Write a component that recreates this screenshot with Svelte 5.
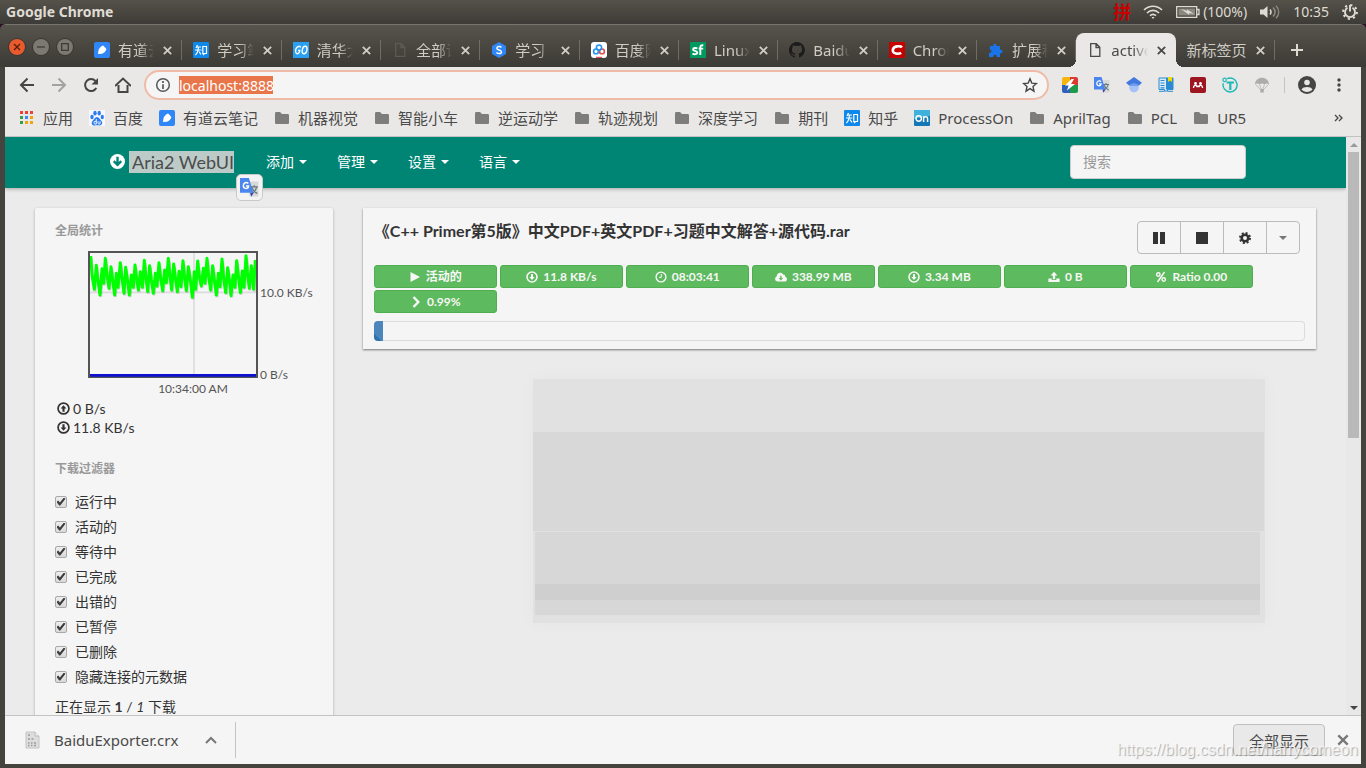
<script>
  const tabs = [
    { icon: 'note', title: '有道云笔记' },
    { icon: 'zhi', title: '学习笔记' },
    { icon: 'go', title: '清华大学' },
    { icon: 'page', title: '全部课程', dim: true },
    { icon: 'hex', title: '学习' },
    { icon: 'pan', title: '百度网盘' },
    { icon: 'sf', title: 'Linux下' },
    { icon: 'github', title: 'BaiduEx' },
    { icon: 'csdn', title: 'Chrome' },
    { icon: 'puzzle', title: '扩展程序' },
    { icon: 'page', title: 'active:1', active: true },
    { icon: '', title: '新标签页' }
  ];

  const bookmarks = [
    { icon: 'apps', title: '应用' },
    { icon: 'paw', title: '百度' },
    { icon: 'note', title: '有道云笔记' },
    { icon: 'folder', title: '机器视觉' },
    { icon: 'folder', title: '智能小车' },
    { icon: 'folder', title: '逆运动学' },
    { icon: 'folder', title: '轨迹规划' },
    { icon: 'folder', title: '深度学习' },
    { icon: 'folder', title: '期刊' },
    { icon: 'zhi', title: '知乎' },
    { icon: 'on', title: 'ProcessOn' },
    { icon: 'folder', title: 'AprilTag' },
    { icon: 'folder', title: 'PCL' },
    { icon: 'folder', title: 'UR5' }
  ];

  const extensions = ['flash', 'translate', 'scholar', 'book', 'mendeley', 'tee', 'parachute'];
  const menus = ['添加', '管理', '设置', '语言'];

  let filters = $state([
    { label: '运行中', on: true },
    { label: '活动的', on: true },
    { label: '等待中', on: true },
    { label: '已完成', on: true },
    { label: '出错的', on: true },
    { label: '已暂停', on: true },
    { label: '已删除', on: true },
    { label: '隐藏连接的元数据', on: true }
  ]);

  const stats = [
    { icon: 'play', text: '活动的' },
    { icon: 'down', text: '11.8 KB/s' },
    { icon: 'clock', text: '08:03:41' },
    { icon: 'cloud', text: '338.99 MB' },
    { icon: 'down', text: '3.34 MB' },
    { icon: 'upload', text: '0 B' },
    { icon: 'percent', text: 'Ratio 0.00' },
    { icon: 'chevron', text: '0.99%' }
  ];

  const progress = 0.99;
  let url = $state('localhost:8888');
  let search = $state('');

  // download speed samples, in the units of the graph's viewBox
  const speed =
    '272,168 276,225 283,268 289,196 293,235 300,285 306,206 311,250 316,175 321,225 327,265 333,200 338,240 344,285 349,220 354,262 361,188 366,235 372,280 377,202 383,245 388,285 394,225 400,262 405,195 410,235 415,270 421,215 427,262 433,181 438,235 443,275 449,197 454,240 460,280 466,220 471,258 477,188 482,235 488,272 494,210 499,248 505,175 510,230 515,270 521,192 527,240 532,275 537,214 543,260 549,182 554,235 559,272 565,200 571,240 577,292 583,215 587,268 593,183 598,230 604,258 610,205 615,250 621,175 626,230 632,270 638,197 643,240 649,285 655,220 660,260 666,177 671,235 677,278 683,203 688,240 693,287 699,225 705,262 710,182 716,235 721,278 727,213 732,262 738,167 743,225 748,265 754,197 761,268 766,180';
</script>

{#snippet icon(name)}
  <svg class="icon" viewBox="0 0 16 16" width="16" height="16" aria-hidden="true">
    {#if name === 'note'}
      <rect width="16" height="16" rx="2" fill="#2f86f6" />
      <path d="M4 12l.6-4.200c1-2.400 2.800-3.800 4.600-4.300L12.400 7c-.4 2-2.400 4.300-4.400 4.700z" fill="#fff" />
    {:else if name === 'zhi'}
      <rect width="16" height="16" rx="1" fill="#0f88eb" />
      <path d="M4.500 3L3 6M3.500 5H8M2 8h6.400M5.400 5c0 4-.8 6-3 8M6 9.500L8 12.500M9.800 4.500h3.700v7H9.800zM10 13l1.500-1.500" fill="none" stroke="#fff" stroke-width="1.200" />
    {:else if name === 'go'}
      <rect width="16" height="16" fill="#2ba0f3" />
      <path d="M7.600 5.500C7 3.400 3.800 4.300 2.800 7.200c-.9 3 .6 5 2.200 4.400 1-.3 1.600-1.200 1.800-3.200H5" fill="none" stroke="#fff" stroke-width="1.400" />
      <ellipse cx="11.600" cy="8" rx="2.300" ry="3.800" transform="rotate(12 11.600 8)" fill="none" stroke="#fff" stroke-width="1.400" />
    {:else if name === 'page'}
      <path d="M3.700 1.700h5.600l3.500 3.600v9H3.700zM9 2v3.500h3.500" fill="none" stroke="currentColor" stroke-width="1.300" />
    {:else if name === 'hex'}
      <path d="M8 0l7 4v8l-7 4-7-4V4z" fill="#2f86f6" />
      <path d="M10.400 5.500C9.600 4.200 5.800 4 5.800 6.200c0 2.300 4.600 1.300 4.600 3.700 0 2.300-4 2-4.900.4" fill="none" stroke="#fff" stroke-width="1.400" />
    {:else if name === 'pan'}
      <rect width="16" height="16" rx="3" fill="#fff" />
      <circle cx="5" cy="9.400" r="2.400" fill="none" stroke="#2196f3" stroke-width="1.600" />
      <circle cx="11" cy="9.400" r="2.400" fill="none" stroke="#e74c4c" stroke-width="1.600" />
      <circle cx="8" cy="5.600" r="2.600" fill="none" stroke="#2196f3" stroke-width="1.600" />
      <path d="M5 15.500h6" stroke="#e74c4c" stroke-width="1.400" />
    {:else if name === 'sf'}
      <rect width="16" height="16" fill="#009a61" />
      <path d="M7.300 6.600C6 5.600 3 5.800 3.100 7.600c.1 1.700 4.200 1 4.200 3 0 2-3.400 1.900-4.800.8M10.300 13V5.500c0-2 1.200-2.500 3-2M8.600 6.600h4.600" fill="none" stroke="#fff" stroke-width="1.900" />
    {:else if name === 'github'}
      <path d="M8 0a8 8 0 00-2.500 15.600c.4.1.5-.2.5-.4v-1.500c-2.200.5-2.700-1-2.700-1-.4-.9-.9-1.200-.9-1.200-.7-.5.1-.5.1-.5.8.1 1.200.8 1.200.8.7 1.200 1.900.9 2.300.7.1-.5.3-.9.5-1.100-1.800-.2-3.600-.9-3.600-4 0-.9.3-1.600.8-2.100 0-.2-.3-1 .1-2.100 0 0 .7-.2 2.200.8a7.500 7.500 0 014 0c1.500-1 2.200-.8 2.200-.8.4 1.100.2 1.900.1 2.100.5.600.8 1.300.8 2.100 0 3.100-1.900 3.700-3.700 3.900.3.300.6.800.6 1.500v2.300c0 .2.1.5.6.4A8 8 0 008 0z" fill="#1b1b1b" />
    {:else if name === 'csdn'}
      <rect width="16" height="16" fill="#c70000" />
      <path d="M13 5.300C11.500 3.700 4.300 3.600 3.800 8c-.4 4.300 6 4.200 8.400 2.900" fill="none" stroke="#fff" stroke-width="2.600" />
    {:else if name === 'puzzle'}
      <path d="M2 4h3.500C4.600 1.300 8.800.7 8.500 4H12v3.700c3.400-.5 3.400 4 0 3.600V15H8.700c.3-3-3.600-3-3.400 0H1v-4c3 .3 3.100-3.700.6-3.500z" fill="#1a73e8" />
    {:else if name === 'apps'}
      <path d="M1 1h3v3H1zM6 1h3v3H6zM11 1h3v3h-3z" fill="#e94235" />
      <path d="M1 6h3v3H1zM1 11h3v3H1z" fill="#34a04f" />
      <path d="M6 6h3v3H6z" fill="#4285f4" />
      <path d="M11 6h3v3h-3zM6 11h3v3H6zM11 11h3v3h-3z" fill="#f0a30a" />
    {:else if name === 'paw'}
      <rect width="16" height="16" fill="#f7f8fb" />
      <ellipse cx="3" cy="7" rx="1.700" ry="2.200" fill="#2c7cf0" />
      <ellipse cx="6" cy="3.200" rx="1.700" ry="2.400" fill="#2c7cf0" />
      <ellipse cx="10.200" cy="3.200" rx="1.700" ry="2.400" fill="#2c7cf0" />
      <ellipse cx="13.300" cy="7" rx="1.600" ry="2.200" fill="#2c7cf0" />
      <path d="M8 7c2 0 3 2.400 4.600 4.200 1.600 2-.2 4.500-2.400 4.200-1.400-.3-3-.3-4.400 0-2.600.4-4-2-2.400-4.200C5 9.400 6 7 8 7z" fill="#2c7cf0" />
      <path d="M7.300 9v5H5.800c-1.300-.4-1-2.700.2-2.700h1.300M9 11.200V13c0 1 .6 1 2 1v-2.800" fill="none" stroke="#fff" stroke-width=".9" />
    {:else if name === 'folder'}
      <path d="M1 3.500C1 2.500 1.500 2 2.500 2H6l2 2h5.500c1 0 1.500.5 1.500 1.500v7c0 1-.5 1.500-1.500 1.500h-11C1.500 14 1 13.500 1 12.500z" fill="#7d7d7b" />
    {:else if name === 'on'}
      <rect width="16" height="16" rx="1" fill="#1378b8" />
      <path d="M0 0h16v6L0 9z" fill="#3eb1dc" />
      <circle cx="4.700" cy="8.500" r="2.700" fill="none" stroke="#fff" stroke-width="1.500" />
      <path d="M9.600 12V6.200M9.600 8c.9-1.900 4-1.700 4 .3V12" fill="none" stroke="#fff" stroke-width="1.500" />
    {:else if name === 'flash'}
      <path d="M0 2a2 2 0 012-2h6v8H0z" fill="#f6b40e" />
      <path d="M8 0h6a2 2 0 012 2v6H8z" fill="#dc3a2e" />
      <path d="M0 8h8v8H2a2 2 0 01-2-2z" fill="#2d62b8" />
      <path d="M8 8h8v6a2 2 0 01-2 2H8z" fill="#1f9a4c" />
      <path d="M9.500 2L3 8.600h3.600L5 13.500l8-6.500H9l3-5z" fill="#fff" />
    {:else if name === 'translate'}
      <path d="M6 3h9.500v12.500H8z" fill="#d8d8d8" />
      <path d="M9 7.500h6M12 6v1.500M14 7.500c-.5 3-2 4.500-4.500 5.500M10 8c1 2.500 2.500 4 4.600 5" fill="none" stroke="#66787c" stroke-width="1.100" />
      <path d="M8.500 12.500h3L9.500 15.800z" fill="#3346a5" />
      <path d="M0 0h7.500l3.800 12.500H0z" fill="#4b86ee" />
      <path d="M7 4.600C5.600 3 2.700 4 2.800 6.600c.1 2.800 4.200 3 4.400.2H5" fill="none" stroke="#fff" stroke-width="1.200" />
    {:else if name === 'scholar'}
      <circle cx="8" cy="10.600" r="4.800" fill="#a5c1f7" />
      <path d="M8 0l8 5.800-3.300 3C11 6 5 6 3.300 8.800L0 5.800z" fill="#4279de" />
      <path d="M3.500 9C5.200 5.300 10.800 5.300 12.500 9z" fill="#719cf0" />
    {:else if name === 'book'}
      <path d="M1 1h14v11.500H9.500v1.500h-3v-1.500H1z" fill="#d9ebf9" stroke="#2a8bd2" />
      <path d="M8 1h7v11.500H8z" fill="#2a8bd2" />
      <path d="M2.500 3.500h4M2.500 6h4M2.500 8.500h4M2.500 10.800h4" stroke="#2a8bd2" stroke-width="1.200" />
      <path d="M1 14.300h5.500M9.500 14.300H15" stroke="#2a8bd2" />
      <path d="M10 0h4v5l-2-1.500L10 5z" fill="#f3da00" />
    {:else if name === 'mendeley'}
      <rect width="16" height="16" rx="2" fill="#9d1620" />
      <circle cx="5.500" cy="6.500" r="1.400" fill="#fff" />
      <circle cx="10.500" cy="6.500" r="1.400" fill="#fff" />
      <path d="M3.500 11c0-3.500 3.500-3.500 3.500-.8M9 10.200C9 7.500 12.500 7.500 12.500 11M5.500 8.200L8 9.500l2.500-1.300" fill="none" stroke="#fff" stroke-width="1.300" />
    {:else if name === 'tee'}
      <path d="M5 1.700a7 7 0 11-3.700 4.500" fill="none" stroke="#1cb9b7" stroke-width="1.400" />
      <circle cx="2.600" cy="2.900" r="1.700" fill="none" stroke="#1cb9b7" stroke-width="1.200" />
      <path d="M4.500 5.500h7.500M8.300 5.500V13" fill="none" stroke="#1cb9b7" stroke-width="2.200" />
    {:else if name === 'parachute'}
      <path d="M1 7.500c0-9 14-9 14 0-1.500-1.300-3-1.300-4.500 0-1.500-1.300-3.500-1.300-5 0-1.500-1.300-3-1.300-4.500 0z" fill="#acacac" />
      <path d="M1.500 7.500L7 13M14.500 7.500L9 13M5.500 7.500L7.500 13M10.500 7.500L8.500 13" stroke="#acacac" stroke-width=".7" />
      <path d="M6.300 12h3.500v3.500H6.300z" fill="#acacac" />
    {/if}
  </svg>
{/snippet}

{#snippet glyph(name, size)}
  <svg class="icon" viewBox="0 0 12 12" width={size} height={size} aria-hidden="true">
    {#if name === 'play'}
      <path d="M1.500 1l9.500 5-9.500 5z" fill="currentColor" />
    {:else if name === 'down'}
      <circle cx="6" cy="6" r="5" fill="none" stroke="currentColor" stroke-width="1.600" />
      <path d="M5 2.900h2V6h1.700L6 9.100 3.300 6H5z" fill="currentColor" />
    {:else if name === 'up'}
      <circle cx="6" cy="6" r="5" fill="none" stroke="currentColor" stroke-width="1.600" />
      <path d="M5 9.100h2V6h1.700L6 2.900 3.300 6H5z" fill="currentColor" />
    {:else if name === 'clock'}
      <circle cx="6" cy="6" r="4.900" fill="none" stroke="currentColor" stroke-width="1.400" />
      <path d="M6.300 3v3.400H4" fill="none" stroke="currentColor" />
    {:else if name === 'cloud'}
      <path d="M3 10.500C-.6 10.500-.6 6.300 1.700 5.600 1.600 1.400 7 .6 8 3.700c1.600-.4 2.400.8 2.100 2 2.900.9 2.300 4.800-.4 4.800z" fill="currentColor" />
      <path d="M5.200 4.800h1.400v2.300h1.500L5.900 9.500 3.700 7.100h1.500z" fill="#5eba5e" />
    {:else if name === 'upload'}
      <path d="M4.800 8.200V4.500H2.600L6 .8l3.400 3.700H7.200v3.700zM.4 7.600h3.300V9h4.600V7.600h3.300v3.400H.4z" fill="currentColor" />
    {:else if name === 'percent'}
      <circle cx="3.300" cy="3.500" r="1.700" fill="none" stroke="currentColor" stroke-width="1.500" />
      <circle cx="8.700" cy="8.500" r="1.700" fill="none" stroke="currentColor" stroke-width="1.500" />
      <path d="M9.500 1L2.500 11" stroke="currentColor" stroke-width="1.500" />
    {:else if name === 'chevron'}
      <path d="M3.500 1l4.800 5-4.800 5" fill="none" stroke="currentColor" stroke-width="2.400" />
    {:else if name === 'pause'}
      <path d="M0 0h5v12H0zM7 0h5v12H7z" fill="currentColor" />
    {:else if name === 'stop'}
      <path d="M0 0h12v12H0z" fill="currentColor" />
    {:else if name === 'gear'}
      <circle cx="6" cy="6" r="3.300" fill="none" stroke="currentColor" stroke-width="2.600" />
      <circle cx="6" cy="6" r="5" fill="none" stroke="currentColor" stroke-width="2" stroke-dasharray="2 1.927" />
    {:else if name === 'brand'}
      <circle cx="6" cy="6" r="6" fill="#fff" />
      <path d="M6 2.200v6.400M3 5.700l3 3 3-3" fill="none" stroke="#008575" stroke-width="1.900" />
    {:else if name === 'close'}
      <path d="M2 2l8 8M10 2l-8 8" stroke="currentColor" stroke-width="2" />
    {/if}
  </svg>
{/snippet}

<div class="desktop">
  <header class="menubar">
    <span class="app-name">Google Chrome</span>
    <div class="indicators">
      <span class="ime">拼</span>
      <svg class="wifi" width="20" height="14" viewBox="0 0 20 14" fill="none" stroke="currentColor" stroke-width="1.700">
        <path d="M1 5c5-5 13-5 18 0M4 8c3.500-3.500 8.500-3.500 12 0M7 10.700c2-1.800 4-1.800 6 0" />
        <path d="M8.500 12h3L10 14z" fill="currentColor" stroke="none" />
      </svg>
      <svg class="battery" width="24" height="12" viewBox="0 0 24 12" fill="none" stroke="currentColor">
        <path d="M.7.700h20v10.600H.7zM21 3.500h2v5h-2" stroke-width="1.300" />
        <path d="M2.500 2.500H19v7H2.500z" fill="#8b887f" stroke="none" />
        <path d="M5 3l6.500 2L11 3.200 18 8l-5-1 .5 2z" fill="currentColor" stroke="none" />
      </svg>
      <span class="percent">(100%)</span>
      <svg class="volume" width="20" height="14" viewBox="0 0 20 14" fill="none" stroke="currentColor" stroke-width="1.500">
        <path d="M0 4.500h3.500L7.500 1v12L3.500 9.500H0z" fill="currentColor" stroke="none" />
        <path d="M10 4.500c1.300 1.600 1.300 3.400 0 5" />
        <path d="M13 2.500c2.600 2.800 2.600 6.200 0 9M16 .8c3.600 3.800 3.600 8.600 0 12.400" stroke="#8b887f" />
      </svg>
      <span class="clock">10:35</span>
      <svg class="power" width="16" height="16" viewBox="0 0 16 16" fill="none" stroke="currentColor">
        <path d="M5.500 3.800a5 5 0 105 0M8 1v6.500" stroke-width="1.900" />
        <circle cx="8" cy="8" r="6.900" stroke-width="2" stroke-dasharray="2.200 3.219" />
      </svg>
    </div>
  </header>

  <div class="window">
    <div class="tabstrip">
      <div class="controls">
        <button class="control quit" aria-label="Close window">
          <svg width="8" height="8" viewBox="0 0 8 8"><path d="M1 1l6 6M7 1L1 7" stroke="currentColor" stroke-width="1.300" /></svg>
        </button>
        <button class="control" aria-label="Minimize window">
          <svg width="8" height="8" viewBox="0 0 8 8"><path d="M0 4h8" stroke="currentColor" stroke-width="1.300" /></svg>
        </button>
        <button class="control" aria-label="Maximize window">
          <svg width="8" height="8" viewBox="0 0 8 8"><path d="M.7.700h6.600v6.600H.7z" fill="none" stroke="currentColor" stroke-width="1.300" /></svg>
        </button>
      </div>
      <div class="tabs">
        {#each tabs as tab}
          <div class="tab" class:active={tab.active} class:dim={tab.dim}>
            {#if tab.icon}
              {@render icon(tab.icon)}
            {/if}
            <span class="tab-title">{tab.title}</span>
            <button class="tab-close" aria-label="Close tab">{@render glyph('close', 11)}</button>
          </div>
        {/each}
      </div>
      <button class="new-tab" aria-label="New tab">
        <svg width="12" height="12" viewBox="0 0 12 12"><path d="M6 0v12M0 6h12" stroke="currentColor" stroke-width="2" /></svg>
      </button>
    </div>

    <div class="toolbar">
      <div class="nav-buttons">
        <button class="tool" aria-label="Back">
          <svg width="16" height="16" viewBox="0 0 16 16"><path d="M15 8H2M8.500 1.500L2 8l6.500 6.500" fill="none" stroke="currentColor" stroke-width="2" /></svg>
        </button>
        <button class="tool disabled" aria-label="Forward">
          <svg width="16" height="16" viewBox="0 0 16 16"><path d="M1 8h13M7.500 1.500L14 8l-6.500 6.500" fill="none" stroke="currentColor" stroke-width="2" /></svg>
        </button>
        <button class="tool" aria-label="Reload">
          <svg width="16" height="16" viewBox="0 0 16 16"><path d="M13.300 11A6 6 0 1112.500 4" fill="none" stroke="currentColor" stroke-width="2" /><path d="M15 1v6.500H8.500z" fill="currentColor" /></svg>
        </button>
        <button class="tool" aria-label="Home">
          <svg width="16" height="16" viewBox="0 0 16 16"><path d="M3.500 8v7h9V8M0 9l8-7.500L16 9" fill="none" stroke="currentColor" stroke-width="2" /></svg>
        </button>
      </div>
      <div class="omnibox">
        <svg width="16" height="16" viewBox="0 0 16 16"><circle cx="8" cy="8" r="6.300" fill="none" stroke="#55575a" stroke-width="1.500" /><path d="M8 4v2M8 7.200V12" stroke="#55575a" stroke-width="1.700" /></svg>
        <input class="url" type="text" aria-label="Address" bind:value={url} />
        <button class="star" aria-label="Bookmark this page">
          <svg width="16" height="16" viewBox="0 0 16 16"><path d="M8 1.800l1.800 4.300 4.700.4-3.500 3.100 1 4.600-4-2.500-4 2.500 1-4.600-3.500-3.100 4.700-.4z" fill="none" stroke="currentColor" stroke-width="1.400" /></svg>
        </button>
      </div>
      <div class="extensions">
        {#each extensions as name}
          <button class="tool" aria-label={name}>{@render icon(name)}</button>
        {/each}
      </div>
      <div class="profile">
        <button class="tool" aria-label="Profile">
          <svg width="18" height="18" viewBox="0 0 18 18"><circle cx="9" cy="9" r="9" fill="currentColor" /><circle cx="9" cy="6.500" r="2.800" fill="#e9e8e6" /><path d="M3.500 13.500c1.500-3.300 9.500-3.300 11 0-2.500 3.200-8.500 3.200-11 0z" fill="#e9e8e6" /></svg>
        </button>
        <button class="tool" aria-label="Menu">
          <svg width="4" height="16" viewBox="0 0 4 16" fill="currentColor"><circle cx="2" cy="3" r="1.700" /><circle cx="2" cy="8" r="1.700" /><circle cx="2" cy="13" r="1.700" /></svg>
        </button>
      </div>
    </div>

    <nav class="bookmarks">
      {#each bookmarks as mark}
        <a class="bookmark" href="#top">
          {@render icon(mark.icon)}
          {mark.title}
        </a>
      {/each}
      <button class="more" aria-label="More bookmarks">
        <svg width="9" height="8" viewBox="0 0 9 8"><path d="M1 1l3 3-3 3M5 1l3 3-3 3" fill="none" stroke="currentColor" stroke-width="1.400" /></svg>
      </button>
    </nav>

    <div class="viewport">
      <main class="page">
        <nav class="navbar">
          <a class="brand" href="#top">
            {@render glyph('brand', 15)}
            <span class="selected">Aria2 WebUI</span>
            <span class="translate-tip">{@render icon('translate')}</span>
          </a>
          {#each menus as menu}
            <button class="menu">{menu}<span class="caret"></span></button>
          {/each}
          <input class="search" type="search" placeholder="搜索" aria-label="搜索" bind:value={search} />
        </nav>

        <div class="content">
          <aside class="card sidebar">
            <h2>全局统计</h2>
            <div class="graph">
              <svg width="170" height="127" viewBox="264 153 510 381">
                <path d="M582 156v372M268 277h502" stroke="#dcdcdc" stroke-width="5" />
                <polyline points={speed} transform="translate(2 6)" fill="none" stroke="#000" stroke-opacity=".15" stroke-width="9" />
                <polyline points={speed} fill="none" stroke="#00ff00" stroke-width="9" stroke-linejoin="round" />
                <rect x="267" y="156" width="504" height="375" fill="none" stroke="#545454" stroke-width="6" />
                <path d="M270 526h498" stroke="#0f0fd0" stroke-width="8" />
              </svg>
              <div class="y-axis">
                <span>10.0 KB/s</span>
                <span>0 B/s</span>
              </div>
              <span class="x-axis">10:34:00 AM</span>
            </div>
            <p class="rate">{@render glyph('up', 13)} 0 B/s</p>
            <p class="rate">{@render glyph('down', 13)} 11.8 KB/s</p>

            <h2 class="filters-title">下载过滤器</h2>
            {#each filters as filter}
              <label class="filter">
                <input type="checkbox" bind:checked={filter.on} />
                {filter.label}
              </label>
            {/each}
            <p class="showing">正在显示 <b>1</b> / <i>1</i> 下载</p>
          </aside>

          <section class="downloads">
            <article class="card task">
              <div class="task-head">
                <h1>《C++ Primer第5版》中文PDF+英文PDF+习题中文解答+源代码.rar</h1>
                <div class="actions">
                  <button aria-label="暂停">{@render glyph('pause', 12)}</button>
                  <button aria-label="停止">{@render glyph('stop', 12)}</button>
                  <button aria-label="设置">{@render glyph('gear', 12)}</button>
                  <button class="narrow" aria-label="更多"><span class="caret"></span></button>
                </div>
              </div>
              <div class="stats">
                {#each stats as stat}
                  <span class="stat">{@render glyph(stat.icon, 12)}{stat.text}</span>
                {/each}
              </div>
              <div class="progress">
                <div class="bar" style="width: {progress}%"></div>
              </div>
            </article>

            <div class="blocks" aria-hidden="true">
              <div class="block light"></div>
              <div class="block wide"></div>
              <div class="block middle"></div>
              <div class="block dark"></div>
              <div class="block low"></div>
            </div>
          </section>
        </div>
      </main>
      <div class="scrollbar" aria-hidden="true">
        <span class="arrow up"></span>
        <span class="thumb"></span>
        <span class="arrow down"></span>
      </div>
    </div>

    <footer class="shelf">
      <button class="download">
        <svg width="16" height="18" viewBox="0 0 16 18"><path d="M1 1h9l4 4v12H1z" fill="#ddd" stroke="#c4c4c4" /><path d="M10 1v4h4" fill="#f4f4f4" stroke="#b8b8b8" /><path d="M3 4h2M3 8h2M6.500 8h2M3 12h1.500M6 12h1.500M9 12h2M3 14.500h1.500M6 14.500h1.500M9 14.500h2" stroke="#9b9b9b" stroke-width="1.300" /></svg>
        BaiduExporter.crx
        <svg class="expand" width="12" height="8" viewBox="0 0 12 8"><path d="M1 7l5-5 5 5" fill="none" stroke="currentColor" stroke-width="2" /></svg>
      </button>
      <button class="show-all">全部显示</button>
      <button class="shelf-close" aria-label="Close">{@render glyph('close', 14)}</button>
    </footer>
  </div>
  <span class="watermark">https://blog.csdn.net/harrycomeon</span>
</div>

<style>
  :global(body) {
    background: #2a0f22;
  }

  * {
    box-sizing: border-box;
  }

  h1,
  h2,
  p {
    margin: 0;
  }

  a {
    color: inherit;
    text-decoration: none;
  }

  button {
    display: flex;
    align-items: center;
    justify-content: center;
    padding: 0;
    border: 0;
    background: none;
    color: inherit;
    font: inherit;
    cursor: pointer;
  }

  .icon {
    flex-shrink: 0;
  }

  .desktop {
    position: relative;
    display: flex;
    flex-direction: column;
    height: 100vh;
    overflow: hidden;
    font-family: 'Noto Sans', 'Noto Sans CJK SC', sans-serif;
    font-size: 15px;
  }

  /* System menu bar */
  .menubar {
    display: flex;
    flex-shrink: 0;
    align-items: center;
    justify-content: space-between;
    height: 24px;
    padding: 0 8px 0 6px;
    background: linear-gradient(#55524a, #3d3b37);
    color: #dfdbd2;
    font-size: 14px;
    line-height: 20px;
  }

  .app-name {
    font-weight: 700;
  }

  .indicators {
    display: flex;
    align-items: center;
  }

  .ime {
    margin-right: 12px;
    color: #c80000;
    font-size: 18px;
    font-weight: 700;
  }

  .wifi {
    margin-right: 13px;
  }

  .battery {
    margin-right: 3px;
  }

  .percent,
  .clock,
  .volume {
    margin-right: 13px;
  }

  /* Browser window */
  .window {
    display: flex;
    flex: 1;
    flex-direction: column;
    min-height: 0;
    padding: 0 5px 4px;
    border-top: 1px solid #77756e;
    border-radius: 6px 6px 0 0;
    background: #45433e;
  }

  .tabstrip {
    display: flex;
    flex-shrink: 0;
    height: 42px;
    margin: 0 -5px;
    padding: 8px 51px 0 9px;
    border-radius: 6px 6px 0 0;
    background: linear-gradient(#57544c, #3c3a35);
    color: #cfccc5;
  }

  .controls {
    display: flex;
    gap: 8px;
    align-items: center;
    width: 74px;
    padding-bottom: 7px;
  }

  .control {
    width: 16px;
    height: 16px;
    border-radius: 50%;
    background: #7b7972;
    color: #3d3b36;
    box-shadow: 0 0 0 1px #3a3833;
  }

  .quit {
    background: #e95b2c;
    color: #541d0a;
  }

  .tabs {
    display: flex;
    flex: 1;
    min-width: 0;
  }

  .tab {
    position: relative;
    display: flex;
    flex: 1;
    gap: 8px;
    align-items: center;
    min-width: 0;
    padding: 0 9px 0 11px;
    line-height: 20px;
  }

  .tab::after {
    position: absolute;
    top: 7px;
    right: 0;
    width: 1px;
    height: 20px;
    background: #6f6d66;
    content: '';
  }

  .tab-title {
    flex: 1;
    min-width: 0;
    overflow: hidden;
    white-space: nowrap;
    mask-image: linear-gradient(90deg, #000 60%, transparent);
  }

  .tab:last-child .tab-title {
    mask-image: none;
  }

  .tab.dim .icon {
    color: #5c5a54;
  }

  .tab.dim .tab-close .icon {
    color: #cfccc5;
  }

  .tab.active {
    border-radius: 8px 8px 0 0;
    background: #e9e8e6;
    color: #4a4a4a;
  }

  .tab.active::before,
  .tab.active::after {
    position: absolute;
    top: auto;
    bottom: 0;
    width: 8px;
    height: 8px;
    content: '';
  }

  .tab.active::before {
    left: -8px;
    background: radial-gradient(circle at 0 0, transparent 8px, #e9e8e6 8px);
  }

  .tab.active::after {
    right: -8px;
    background: radial-gradient(circle at 100% 0, transparent 8px, #e9e8e6 8px);
  }

  .tab-close {
    flex-shrink: 0;
  }

  .new-tab {
    width: 36px;
    margin-left: 4px;
    color: #dfdbd2;
  }

  /* Toolbar */
  .toolbar {
    display: flex;
    flex-shrink: 0;
    align-items: center;
    height: 36px;
    padding: 0 6px;
    background: #e9e8e6;
    color: #454545;
  }

  .nav-buttons,
  .extensions,
  .profile {
    display: flex;
  }

  .tool {
    width: 32px;
    height: 32px;
  }

  .tool.disabled {
    color: #a2a2a0;
  }

  .omnibox {
    display: flex;
    flex: 1;
    gap: 8px;
    align-items: center;
    height: 30px;
    margin: 0 5px;
    padding: 0 9px;
    border: 2px solid #efbba6;
    border-radius: 15px;
    background: #f5f5f5;
  }

  .url {
    width: 94px;
    height: 18px;
    padding: 0;
    border: 0;
    background: #e9764a;
    color: #fff;
    font: inherit;
    font-size: 14px;
    field-sizing: content;
    outline: 0;
  }

  .star {
    margin-left: auto;
  }

  .profile {
    margin-left: 6px;
    padding-left: 7px;
    background: linear-gradient(#c5c4c2, #c5c4c2) 0 center / 1px 16px no-repeat;
  }

  /* Bookmarks */
  .bookmarks {
    display: flex;
    flex-shrink: 0;
    gap: 16px;
    align-items: center;
    height: 34px;
    padding: 0 18px 4px 14px;
    border-bottom: 1px solid #c3c2c0;
    background: #e9e8e6;
    color: #4a4a4a;
    line-height: 20px;
  }

  .bookmark {
    display: flex;
    gap: 8px;
    align-items: center;
    white-space: nowrap;
  }

  .more {
    margin-left: auto;
  }

  /* Web page */
  .viewport {
    display: flex;
    flex: 1;
    min-height: 0;
    background: #ebebeb;
  }

  .page {
    flex: 1;
    min-width: 0;
    overflow: hidden;
    color: #333;
    font-family: Lato, 'Noto Sans CJK SC', sans-serif;
    font-size: 14px;
    line-height: 20px;
  }

  .navbar {
    display: flex;
    align-items: center;
    height: 51px;
    padding: 0 100px 2px 105px;
    background: #008575;
    box-shadow: 0 1px 4px rgba(0, 0, 0, 0.3);
    color: #fff;
  }

  .brand {
    position: relative;
    display: flex;
    gap: 4px;
    align-items: center;
    margin-right: 17px;
    font-size: 18px;
  }

  .selected {
    padding-left: 3px;
    background: #bccbc8;
    color: #4c4c4c;
    line-height: 22px;
    white-space: nowrap;
  }

  .translate-tip {
    position: absolute;
    top: 23px;
    left: 126px;
    display: flex;
    align-items: center;
    justify-content: center;
    width: 27px;
    height: 27px;
    border: 1px solid #c9c9c9;
    border-radius: 5px;
    background: #f3f3f3;
  }

  .translate-tip .icon {
    width: 19px;
    height: 19px;
  }

  .menu {
    gap: 5px;
    padding: 0 15px;
  }

  .caret {
    border: 4px solid transparent;
    border-top-color: currentColor;
    border-bottom: 0;
  }

  .search {
    width: 176px;
    height: 34px;
    margin-left: auto;
    padding: 0 12px;
    border: 1px solid #ccc;
    border-radius: 4px;
    background: #f5f5f5;
    font: inherit;
  }

  .search::placeholder {
    color: #999;
  }

  .content {
    display: grid;
    grid-template-columns: minmax(0, 5fr) minmax(0, 16fr);
    gap: 30px;
    padding: 20px 30px 0;
  }

  .card {
    border-radius: 2px;
    background: #f5f5f5;
    box-shadow: 0 1px 3px rgba(0, 0, 0, 0.3);
  }

  .sidebar {
    padding: 13px 20px 20px;
  }

  h2 {
    color: #999;
    font-size: 12px;
    font-weight: 700;
    line-height: 20px;
  }

  .graph {
    display: grid;
    grid-template-columns: 170px 1fr;
    column-gap: 2px;
    margin-top: 10px;
    padding-left: 33px;
    color: #545454;
    font-size: 12px;
  }

  /* the last label is centred on the bottom edge of the plot */
  .y-axis {
    display: flex;
    flex-direction: column;
    justify-content: space-between;
    margin-bottom: -7px;
    padding-top: 32px;
    line-height: 20px;
  }

  .x-axis {
    padding-left: 40px;
    text-align: center;
    line-height: 21px;
    white-space: nowrap;
  }

  .rate {
    display: flex;
    gap: 3px;
    align-items: center;
    padding-left: 2px;
    line-height: 19px;
  }

  .filters-title {
    margin: 22px 0 10px;
  }

  .filter {
    display: flex;
    gap: 8px;
    align-items: center;
    height: 25px;
  }

  .filter input {
    display: grid;
    place-items: center;
    width: 12px;
    height: 12px;
    margin: 0;
    border: 1px solid #a9a9a9;
    border-radius: 2px;
    background: linear-gradient(#eee, #d9d9d9);
    appearance: none;
  }

  .filter input:checked::before {
    width: 9px;
    height: 8px;
    background: #3d3d3d;
    clip-path: polygon(0 55%, 18% 38%, 38% 62%, 82% 0, 100% 16%, 42% 100%, 30% 100%);
    content: '';
  }

  .showing {
    margin-top: 8px;
  }

  /* Download task */
  .task {
    padding: 13px 11px 8px;
    border-radius: 0;
    box-shadow: 0 1px 2px rgba(0, 0, 0, 0.5);
  }

  .task-head {
    display: flex;
    align-items: flex-start;
    justify-content: space-between;
    padding-right: 5px;
  }

  h1 {
    font-size: 16px;
    font-weight: 700;
    line-height: 20px;
  }

  .actions {
    display: flex;
    flex-shrink: 0;
    border: 1px solid #bbb;
    border-radius: 4px;
  }

  .actions button {
    width: 43px;
    height: 31px;
    border-left: 1px solid #bbb;
  }

  .actions button:first-child {
    width: 42px;
    border-left: 0;
  }

  .actions .narrow {
    width: 33px;
    color: #777;
  }

  .stats {
    display: flex;
    flex-wrap: wrap;
    gap: 2px 3px;
    margin-top: 11px;
  }

  .stat {
    display: flex;
    gap: 5px;
    align-items: center;
    justify-content: center;
    width: 123px;
    height: 23px;
    border: 1px solid #4fae4f;
    border-radius: 3px;
    background: #5eba5e;
    color: #f7f7f7;
    font-size: 12px;
    font-weight: 700;
  }

  .progress {
    height: 20px;
    margin-top: 8px;
    border-radius: 4px;
    box-shadow: inset 0 0 0 1px #dcdcdc;
    overflow: hidden;
  }

  .bar {
    height: 100%;
    background: linear-gradient(45deg, #2f72b0 25%, #4a86bb 25%);
  }

  .blocks {
    margin: 30px 51px 0 170px;
    padding-bottom: 8px;
    background: #e1e1e1;
    box-shadow: 0 0 16px rgba(0, 0, 0, 0.03);
  }

  .block {
    margin: 0 5px 0 2px;
    background: #d7d7d7;
  }

  .block.light {
    height: 53px;
    background: #e1e1e1;
  }

  .block.wide {
    height: 99px;
    margin: 0 1px 1px 0;
    background: #d8d8d8;
  }

  .block.middle {
    height: 52px;
  }

  .block.dark {
    height: 16px;
    background: #cfcfcf;
  }

  .block.low {
    height: 15px;
  }

  .scrollbar {
    display: flex;
    flex-direction: column;
    align-items: center;
    width: 15px;
    padding: 6px 0 5px;
    background: #e8e8e8;
  }

  .thumb {
    width: 11px;
    height: 286px;
    margin: 5px 0 auto;
    background: #b9b9b9;
  }

  .arrow {
    border: 4px solid transparent;
  }

  .arrow.up {
    border-top: 0;
    border-bottom-color: #9a9a9a;
  }

  .arrow.down {
    border-top-color: #454545;
    border-bottom: 0;
  }

  /* Download shelf */
  .shelf {
    display: flex;
    flex-shrink: 0;
    align-items: center;
    height: 49px;
    padding-right: 11px;
    border-top: 1px solid #c3c3c3;
    background: #f5f5f5;
    color: #4a4a4a;
  }

  .download {
    height: 36px;
    gap: 13px;
    padding: 0 18px 0 20px;
    border-right: 1px solid #c3c3c3;
  }

  .expand {
    margin-left: 14px;
    color: #777;
  }

  .show-all {
    width: 92px;
    height: 32px;
    margin: 0 11px 0 auto;
    border: 1px solid #c0c0c0;
    border-radius: 4px;
    background: #e9e9e9;
  }

  .shelf-close {
    color: #777;
  }

  .watermark {
    position: absolute;
    right: 8px;
    bottom: 8px;
    color: rgba(255, 255, 255, 0.7);
    font-family: 'Liberation Sans', sans-serif;
    font-size: 16px;
    line-height: 20px;
    text-shadow: 1px 1px 1px rgba(0, 0, 0, 0.3);
    pointer-events: none;
  }
</style>
